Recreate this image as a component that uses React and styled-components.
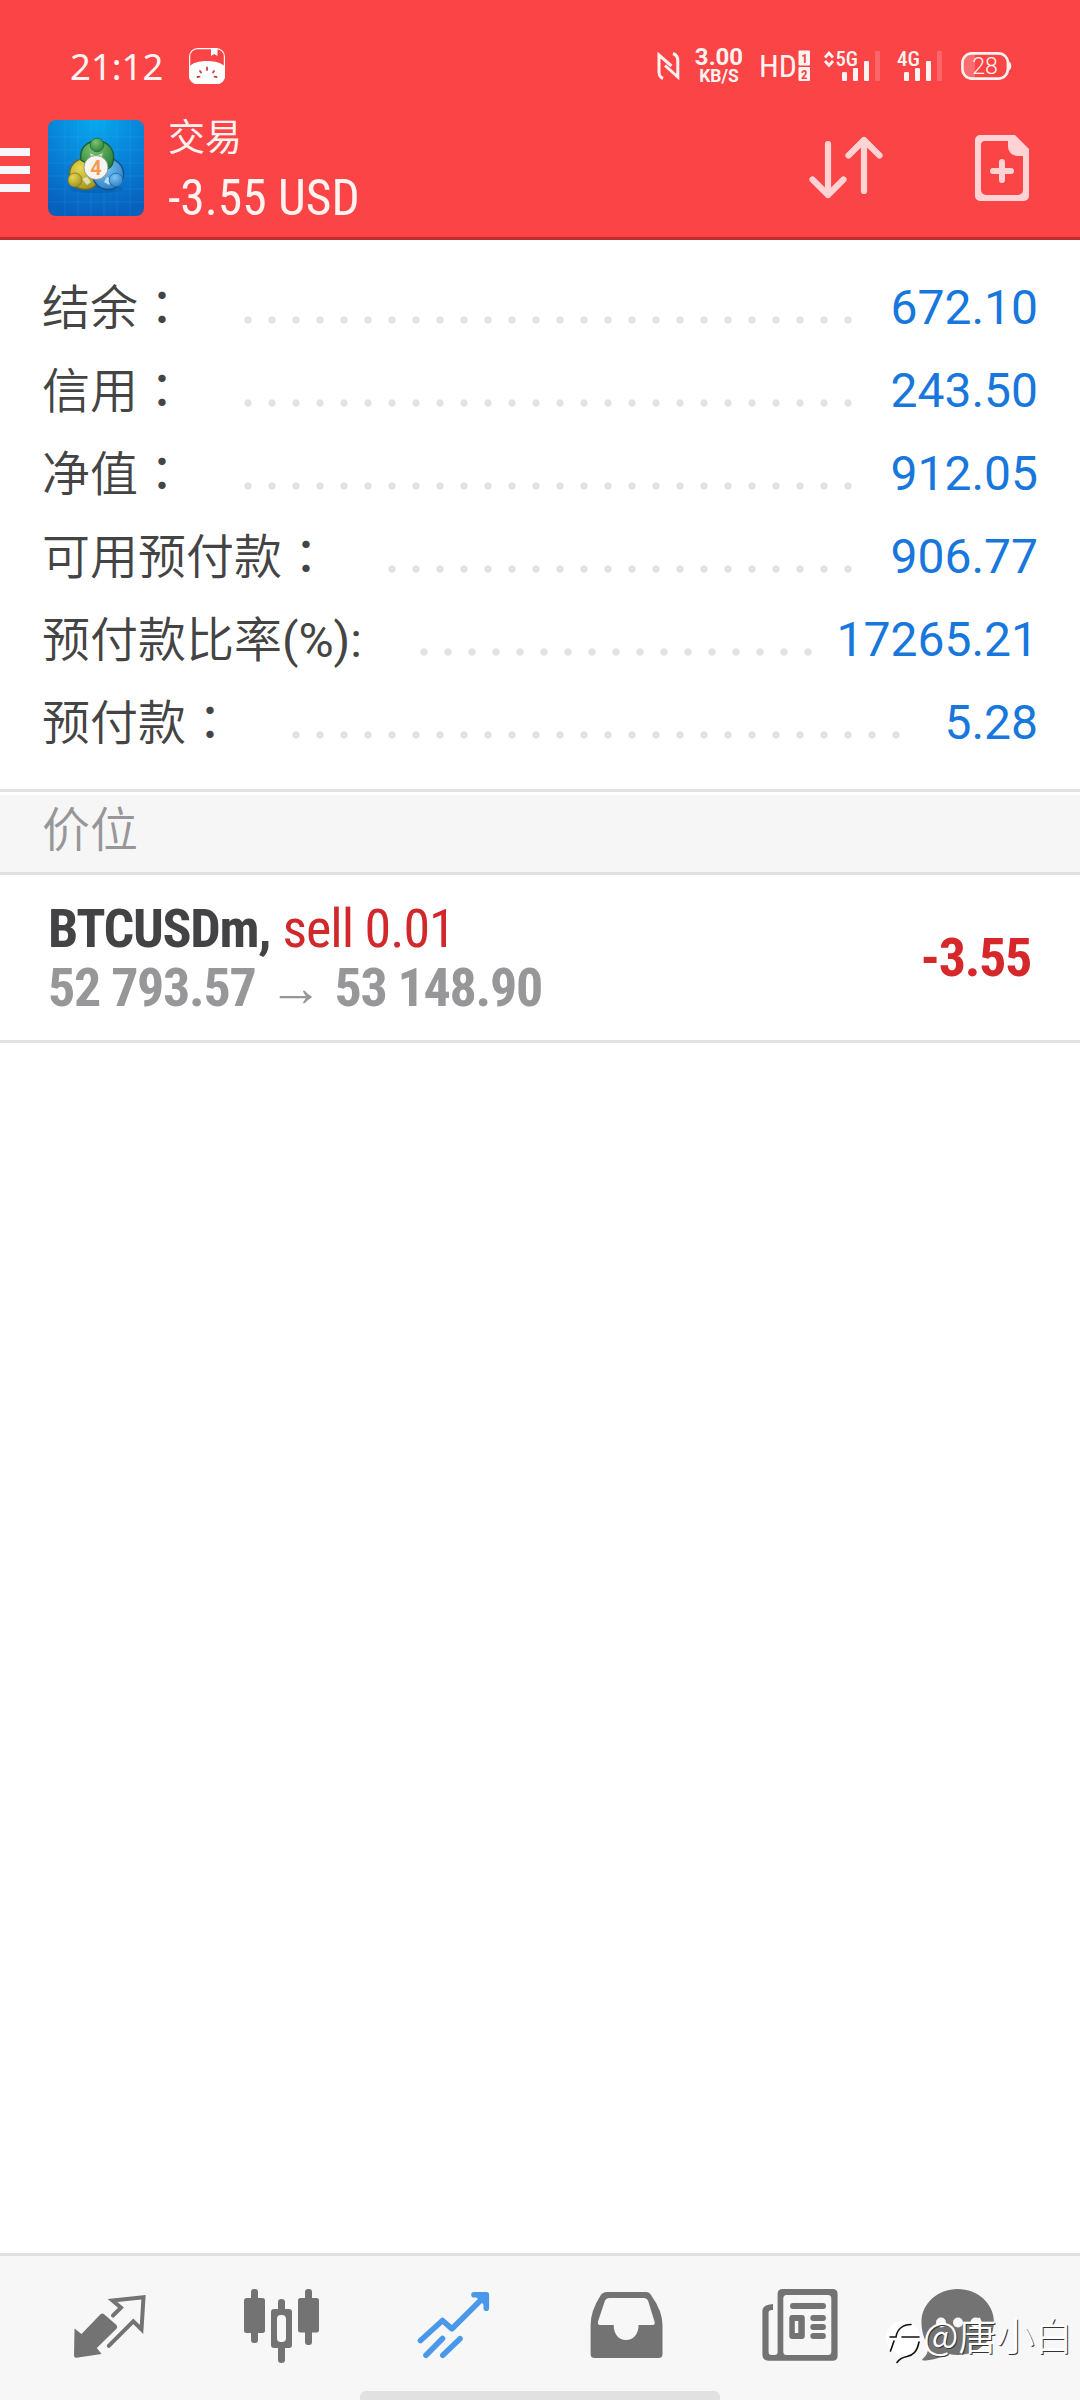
import styled, { createGlobalStyle } from "styled-components"

const GlobalStyle = createGlobalStyle`
body {
    margin: 0;
    background-color: #fff;
}
* {
    box-sizing: border-box;
}
svg {
    display: block;
    flex-shrink: 0;
    overflow: visible;
}
`
const condensed = "'Roboto Condensed', Roboto, 'Noto Sans CJK SC', sans-serif"

const Container = styled.div`
position: relative;
display: flex;
flex-direction: column;
width: 1080px;
height: 2400px;
overflow: hidden;
background-color: #fff;
font-family: Roboto, "Noto Sans CJK SC", sans-serif;
`
const Header = styled.header`
height: 240px;
background-color: #fa4446;
border-bottom: 3px solid #bf2d2f;
`
const StatusBar = styled.div`
display: flex;
align-items: center;
height: 99px;
padding: 33px 68px 0 70px;
color: #fff3f1;
`
const Clock = styled.span`
width: 119px;
font-family: "Noto Sans", sans-serif;
font-size: 36.500px;
line-height: 40px;
`
const StatusIcons = styled.div`
display: flex;
align-items: center;
margin-left: auto;
`
const Speed = styled.div`
display: flex;
flex-direction: column;
align-items: center;
width: 48px;
margin: 0 18px 0 15px;
padding-top: 2px;
font-weight: 700;
`
const SpeedValue = styled.span`
font-size: 24px;
line-height: 19px;
`
const SpeedUnit = styled.span`
font-size: 17.500px;
line-height: 19px;
`
const SignalIcon = styled.svg`
margin-left: ${props => props.$gap}px;
`
const AppBar = styled.div`
display: flex;
align-items: center;
height: 138px;
padding-right: 51px;
color: #fff3f1;
`
const Logo = styled.svg`
margin: 0 24px 0 18px;
`
const Titles = styled.div`
display: flex;
flex-direction: column;
`
const Title = styled.span`
font-size: 37px;
font-weight: 400;
line-height: 60px;
`
const Amount = styled.span`
font-family: ${condensed};
font-size: 49.500px;
font-weight: 450;
line-height: 58px;
`
const Actions = styled.div`
display: flex;
align-items: center;
gap: 92px;
margin-left: auto;
`
const Summary = styled.section`
padding: 26px 42px 25px;
`
const SummaryRow = styled.div`
display: flex;
height: 83px;
font-size: 48px;
line-height: 83px;
`
const Label = styled.span`
padding-top: 1px;
color: #444;
font-weight: 350;
white-space: nowrap;
`
const Latin = styled.span`
font-weight: 400;
`
const Colon = styled.span`
font-family: Roboto, "Noto Sans CJK TC", sans-serif;
font-weight: 400;
`
const Leader = styled.span`
width: ${props => props.$dots * 24}px;
margin-left: 50px;
background: radial-gradient(circle at 12px 54px, #e2e2e2 3.2px, transparent 4.2px) 0 0 / 24px 83px repeat-x;
`
const Value = styled.span`
margin-left: auto;
color: #1777dc;
`
const SectionTitle = styled.h2`
height: 86px;
margin: 0;
padding-left: 42px;
border-top: 3px solid #e3e3e3;
border-bottom: 3px solid #e1e1e1;
box-shadow: inset 0 3px 0 #fff;
background-color: #f6f6f6;
color: #97979a;
font-size: 48px;
font-weight: 350;
line-height: 78px;
`
const Position = styled.div`
display: flex;
align-items: center;
justify-content: space-between;
height: 168px;
padding: 0 49px 0 48px;
border-bottom: 3px solid #e3e3e3;
font-family: ${condensed};
font-size: 54px;
font-weight: 700;
letter-spacing: -1.300px;
`
const PositionLine = styled.div`
height: 59px;
line-height: 59px;
color: ${props => props.color};
white-space: pre;
`
const Side = styled.span`
margin-left: 1px;
color: #d0282b;
font-weight: 400;
letter-spacing: -1px;
`
const Arrow = styled.span`
margin: 0 2px;
font-family: Roboto, sans-serif;
font-weight: 700;
`
const Profit = styled.span`
padding-top: 1px;
color: #d6282b;
line-height: 60px;
`
const TabBar = styled.nav`
display: grid;
grid-template-columns: repeat(6, 172px);
justify-content: center;
height: 147px;
margin-top: auto;
padding-top: 24px;
border-top: 3px solid #e1e1e1;
background-color: #f7f7f7;
`
const Tab = styled.svg`
justify-self: center;
color: ${props => props.$active ? "#4a98ea" : "#737373"};
`
const HomeBar = styled.div`
position: absolute;
left: 360px;
bottom: -4px;
width: 360px;
height: 13px;
border-radius: 6px;
background-color: #e1e1e1;
`
const Watermark = styled.div`
position: absolute;
left: 884px;
top: 2316px;
display: flex;
align-items: center;
color: #fff;
font-family: "Noto Sans CJK SC", sans-serif;
font-size: 38px;
font-weight: 350;
line-height: 36px;
text-shadow: 1px 1px 0 #333;
`
const WatermarkText = styled.span`
height: 44px;
`

const Bars = ({ x }) => (
    <g fill="currentColor">
        <rect x={x} y="22" width="5" height="9" rx="1"/>
        <rect x={x + 11} y="18" width="5" height="13" rx="1"/>
        <rect x={x + 22} y="11" width="5" height="20" rx="1"/>
        <rect x={x + 33} y="1" width="5" height="30" rx="1" opacity="0.2"/>
    </g>
)

const BookIcon = () => (
    <svg width="36" height="36" viewBox="0 0 36 36">
        <rect x="0.6" y="0.6" width="34.8" height="34.8" rx="8" fill="none" stroke="#fff" strokeWidth="1.2"/>
        <path d="M22 0h6.500v8l-3.200-2-3.300 2z" fill="#fff"/>
        <path d="M0 19C5 11 31 11 36 19v9a8 8 0 0 1-8 8H8a8 8 0 0 1-8-8z" fill="#fff"/>
        <path d="M18 19.500v2.500M11 23l1 1.500M25 23l-1 1.500M8.500 29l2-.4M27.500 29l-2-.4" stroke="#c8403f" strokeWidth="1.800" strokeLinecap="round"/>
    </svg>
)

const NfcIcon = () => (
    <svg width="23" height="28" viewBox="0 0 23 28" fill="none" stroke="currentColor" strokeWidth="3">
        <path d="M6 26.500C2.500 25 2 23 2 20V3L14.500 14"/>
        <path d="M16 1.500c4 1.500 4.800 3.500 4.800 7v16.500L8 13.500"/>
    </svg>
)

const HdIcon = () => (
    <svg width="49" height="34" viewBox="0 0 49 34" fontFamily="Roboto Condensed, Roboto, sans-serif">
        <text x="-2" y="28" fontSize="32" fontWeight="400" textLength="38" lengthAdjust="spacingAndGlyphs" fill="currentColor">HD</text>
        <rect x="37.500" y="1.500" width="11.500" height="15" rx="1" fill="currentColor"/>
        <rect x="37.500" y="18" width="11.500" height="14" rx="1" fill="currentColor"/>
        <text x="40.200" y="14" fontSize="13" fontWeight="700" fill="#fa4446">1</text>
        <text x="40" y="29.500" fontSize="13" fontWeight="700" fill="#fa4446">2</text>
    </svg>
)

const Signal5G = () => (
    <SignalIcon $gap={13} width="58" height="32" viewBox="0 0 58 32">
        <path d="M2 7.500l4-4.500 4 4.500M2 11l4 4.500 4-4.500" fill="none" stroke="currentColor" strokeWidth="2.800"/>
        <text x="12.500" y="16" fontFamily="Roboto Condensed, Roboto, sans-serif" fontSize="20.500" fontWeight="500" textLength="22.500" lengthAdjust="spacingAndGlyphs" fill="currentColor">5G</text>
        <Bars x={19}/>
    </SignalIcon>
)

const Signal4G = () => (
    <SignalIcon $gap={16} width="46" height="32" viewBox="0 0 46 32">
        <text x="0" y="16" fontFamily="Roboto Condensed, Roboto, sans-serif" fontSize="20.500" fontWeight="500" textLength="23" lengthAdjust="spacingAndGlyphs" fill="currentColor">4G</text>
        <Bars x={7}/>
    </SignalIcon>
)

const Battery = () => (
    <SignalIcon $gap={18} width="51" height="28" viewBox="0 0 51 28">
        <path d="M11 2h3v24h-3a9 9 0 0 1-9-9v-6a9 9 0 0 1 9-9z" fill="#fff" opacity="0.22"/>
        <rect x="1.400" y="1.400" width="45.500" height="25.200" rx="9.500" fill="none" stroke="currentColor" strokeWidth="2.600"/>
        <path d="M48 9.500c3 1 3 8 0 9z" fill="currentColor"/>
        <text x="24" y="22" fontSize="23" fontWeight="350" textAnchor="middle" fill="currentColor">28</text>
    </SignalIcon>
)

const MenuIcon = () => (
    <svg width="30" height="48" viewBox="0 0 30 48" fill="#f6f6fc">
        <rect y="4" width="30" height="8"/>
        <rect y="22" width="30" height="8"/>
        <rect y="40" width="30" height="8"/>
    </svg>
)

const AppLogo = () => (
    <Logo width="96" height="96" viewBox="0 0 96 96">
        <defs>
            <radialGradient id="sky" cx="0.5" cy="0" r="1">
                <stop offset="0" stopColor="#08a9ef"/>
                <stop offset="0.5" stopColor="#0783d8"/>
                <stop offset="1" stopColor="#0860bd"/>
            </radialGradient>
            <radialGradient id="green" cx="0.4" cy="0.3" r="0.8">
                <stop offset="0" stopColor="#7cc470"/>
                <stop offset="1" stopColor="#237a34"/>
            </radialGradient>
            <radialGradient id="yellow" cx="0.35" cy="0.3" r="0.9">
                <stop offset="0" stopColor="#e6d850"/>
                <stop offset="1" stopColor="#93851c"/>
            </radialGradient>
            <radialGradient id="blue" cx="0.4" cy="0.3" r="0.9">
                <stop offset="0" stopColor="#7cc6f3"/>
                <stop offset="1" stopColor="#1c70bd"/>
            </radialGradient>
        </defs>
        <rect width="96" height="96" rx="8" fill="url(#sky)"/>
        <path d="M17 0v96M30 0v96M43 0v96M56 0v96M69 0v96M82 0v96M0 17h96M0 30h96M0 43h96M0 56h96M0 69h96M0 82h96" stroke="#5cc0f2" strokeWidth="0.7" opacity="0.2"/>
        <ellipse cx="48" cy="69" rx="27" ry="4" fill="#05408a" opacity="0.25"/>
        <circle cx="37" cy="54" r="15.500" fill="url(#yellow)" stroke="#6d6a22" strokeWidth="1.400"/>
        <circle cx="60" cy="54" r="15.500" fill="url(#blue)" stroke="#164f86" strokeWidth="1.400"/>
        <path d="M33 40c-2-12 6-19 16-19s19 8 16 21c-1 6-6 8-9 6L40 44z" fill="url(#green)" stroke="#1d5f32" strokeWidth="1.400"/>
        <path d="M42 33l6 3 7-3-2 6H43zM34 59l5-2 4 5-4 3zM56 62l3-5 5 3-3 5z" fill="#e9f6ef" opacity="0.7"/>
        <circle cx="49" cy="25" r="6.800" fill="url(#green)" stroke="#1f6a35" strokeWidth="0.8"/>
        <circle cx="27" cy="60" r="7" fill="url(#yellow)" stroke="#8d7c1b" strokeWidth="0.8"/>
        <circle cx="68" cy="60" r="6.800" fill="url(#blue)" stroke="#1a67ad" strokeWidth="0.8"/>
        <circle cx="48" cy="47.500" r="12" fill="#f7f5f3" stroke="#8c8f7a" strokeWidth="0.8"/>
        <text x="48" y="54.500" fontSize="20" fontWeight="700" textAnchor="middle" fill="#f59b4c">4</text>
    </Logo>
)

const SortIcon = () => (
    <svg width="74" height="66" viewBox="0 0 74 66" fill="none" stroke="#ffd2d3" strokeWidth="6.200" strokeLinecap="round" strokeLinejoin="round">
        <path d="M19 9v51M3.500 44.500l15.500 15.500 15.500-15.500"/>
        <path d="M55 56V5M39.500 20.500L55 5l15.500 15.500"/>
    </svg>
)

const NewOrderIcon = () => (
    <svg width="54" height="66" viewBox="0 0 54 66">
        <path fillRule="evenodd" d="M5 0h35l14 14v47a5 5 0 0 1-5 5H5a5 5 0 0 1-5-5V5a5 5 0 0 1 5-5zM10 6a4 4 0 0 0-4 4v45a5 5 0 0 0 5 5h32a5 5 0 0 0 5-5V21h-4c-7 0-11-4-11-10V6z" fill="#ffd2d3"/>
        <path d="M27 27v18M18 36h18" stroke="#ffd2d3" strokeWidth="6" strokeLinecap="round"/>
    </svg>
)

const QuotesTab = () => (
    <Tab width="80" height="90" viewBox="0 0 80 90">
        <path d="M4.500 48.500l7 5.500 19-19.700q1.800-1.500 3.600 0L46.500 45q1.400 2 0 3.800L26.800 68l4.800 6L6.500 77.800Q4 78 4 75.500z" fill="currentColor"/>
        <path d="M43 35.500l8-7.800-8.500-7.200 31-3.200-2 32.200-8.200-8.200-24.500 24.500" fill="none" stroke="currentColor" strokeWidth="4" strokeLinecap="round"/>
    </Tab>
)

const ChartTab = () => (
    <Tab width="80" height="90" viewBox="0 0 80 90" fill="currentColor">
        <rect x="2" y="18" width="21" height="35" rx="2.500"/>
        <rect x="9" y="9" width="7" height="54" rx="3"/>
        <path fillRule="evenodd" d="M32 29h15q3 0 3 3v33q0 3-3 3H32q-3 0-3-3V32q0-3 3-3zM38.500 35q-3.500 0-3.500 4v19q0 4 3.500 4h1.500q4 0 4-4V39q0-4-4-4z"/>
        <path d="M36 30v-8q0-3 3.500-3t3.500 3v8zM36 67v13q0 3 3.500 3t3.500-3V67z"/>
        <rect x="56" y="18" width="21" height="34.500" rx="2.500"/>
        <rect x="63" y="9" width="7" height="56" rx="3"/>
    </Tab>
)

const TradeTab = () => (
    <Tab $active width="80" height="90" viewBox="0 0 80 90" fill="none" stroke="currentColor" strokeWidth="5.600" strokeLinecap="round" strokeLinejoin="round">
        <path d="M6.500 60.500l22-20 9.500 8.300L71 16"/>
        <path d="M60 14.800h12.300v13.500"/>
        <path d="M28.500 58.500L12 75.300M46 58.800L28.800 75.300"/>
        <path d="M62 17l8 8V17z" fill="currentColor" stroke="none"/>
    </Tab>
)

const MailTab = () => (
    <Tab width="80" height="90" viewBox="0 0 80 90">
        <path fillRule="evenodd" d="M21 12h39q3.500 0 5 3Q76.500 31 76.500 45v29q0 4-4 4H8.600q-4 0-4-4V45q0-14 9.900-29.500Q16.500 12 21 12zM23 18q-3 0-4 2.500L12 41.500q-.5 3.500 2 3.500h13.700c0 9 5 15 12.300 15s12.600-6 12.600-15h13.900q3 0 2-3.500L62 20.500Q61 18 58 18z" fill="currentColor"/>
    </Tab>
)

const NewsTab = () => (
    <Tab width="80" height="90" viewBox="0 0 80 90">
        <path fillRule="evenodd" d="M24.600 9h50q5 0 5 5v61.700q0 5-5 5H10.400q-6-.5-6-6V31q0-6.500 10.600-7v6q-4.400-.5-4.400 2.500V72q0 3 3 3h3q2.500 0 3-2V14q0-5 5-5zM28.500 15q-3.200 0-3.200 3.500v53q0 3.500 3.200 3.500h41.500q3.300 0 3.300-3.500v-53q0-3.500-3.300-3.500z" fill="currentColor"/>
        <g fill="currentColor">
            <rect x="32" y="23" width="36" height="6" rx="3"/>
            <path fillRule="evenodd" d="M34.300 35h9.500q3 0 3 3v18q0 3-3 3h-9.500q-3 0-3-3V38q0-3 3-3zM36.800 41v12h3.500V41z"/>
            <rect x="52.300" y="35" width="15.600" height="6" rx="3"/>
            <rect x="52.300" y="44" width="15.600" height="6" rx="3"/>
            <rect x="52.300" y="53" width="15.600" height="6" rx="3"/>
        </g>
    </Tab>
)

const ChatTab = () => (
    <Tab width="80" height="90" viewBox="0 0 80 90">
        <path d="M27.700 9c20 0 36.200 14.500 36.200 33S47.700 75 27.700 75c-3 0-6-.4-9-1-8 4-18 6.500-25.500 6.500-1 0-1.200-1-.5-1.700 4-3 5.800-8 5.800-13.300-4.500-6-7-14-7-23.500C-8.500 23.500 7.700 9 27.700 9z" fill="currentColor"/>
        <g fill="#f7f7f7">
            <circle cx="11" cy="42.500" r="5"/>
            <circle cx="28" cy="42.500" r="5"/>
            <circle cx="45.500" cy="42.500" r="5"/>
        </g>
    </Tab>
)

const WatermarkIcon = () => (
    <svg width="39" height="44" viewBox="0 0 39 44" fill="none" strokeLinecap="round">
        <circle cx="19" cy="22" r="17" fill="#fff"/>
        <path d="M6 21h6C13 13 19 8.500 27 8.500M18 21h17M10 25L6.500 35M35 26c-2 10-6 13-12 14.500-5 1-8 3-10 6" stroke="#111" strokeWidth="1.600"/>
    </svg>
)

const summary = [
    { label: "结余", colon: "：", dots: 26, value: "672.10" },
    { label: "信用", colon: "：", dots: 26, value: "243.50" },
    { label: "净值", colon: "：", dots: 26, value: "912.05" },
    { label: "可用预付款", colon: "：", dots: 20, value: "906.77" },
    { label: "预付款比率", unit: "(%)", colon: ":", dots: 17, value: "17265.21" },
    { label: "预付款", colon: "：", dots: 26, value: "5.28" },
]

const App = () => {
    return (
        <Container>
            <GlobalStyle/>
            <Header>
                <StatusBar>
                    <Clock>21:12</Clock>
                    <BookIcon/>
                    <StatusIcons>
                        <NfcIcon/>
                        <Speed>
                            <SpeedValue>3.00</SpeedValue>
                            <SpeedUnit>KB/S</SpeedUnit>
                        </Speed>
                        <HdIcon/>
                        <Signal5G/>
                        <Signal4G/>
                        <Battery/>
                    </StatusIcons>
                </StatusBar>
                <AppBar>
                    <MenuIcon/>
                    <AppLogo/>
                    <Titles>
                        <Title>交易</Title>
                        <Amount>-3.55 USD</Amount>
                    </Titles>
                    <Actions>
                        <SortIcon/>
                        <NewOrderIcon/>
                    </Actions>
                </AppBar>
            </Header>
            <Summary>
                {summary.map(row => (
                    <SummaryRow key={row.label}>
                        <Label>
                            {row.label}
                            {row.unit && <Latin>{row.unit}</Latin>}
                            <Colon>{row.colon}</Colon>
                        </Label>
                        <Leader $dots={row.dots}/>
                        <Value>{row.value}</Value>
                    </SummaryRow>
                ))}
            </Summary>
            <SectionTitle>价位</SectionTitle>
            <Position>
                <div>
                    <PositionLine color="#434345">BTCUSDm, <Side>sell 0.01</Side></PositionLine>
                    <PositionLine color="#97979a">52 793.57 <Arrow>→</Arrow> 53 148.90</PositionLine>
                </div>
                <Profit>-3.55</Profit>
            </Position>
            <TabBar>
                <QuotesTab/>
                <ChartTab/>
                <TradeTab/>
                <MailTab/>
                <NewsTab/>
                <ChatTab/>
            </TabBar>
            <HomeBar/>
            <Watermark>
                <WatermarkIcon/>
                <WatermarkText>@唐小白</WatermarkText>
            </Watermark>
        </Container>
    )
}

export default App
